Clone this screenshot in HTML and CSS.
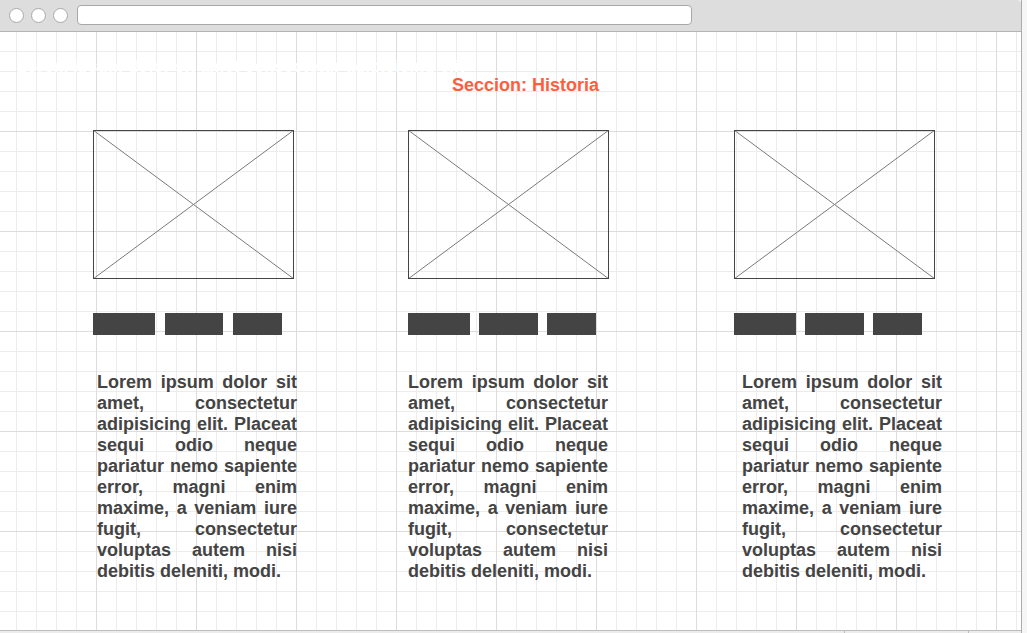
FILE: index.html
```html
<!DOCTYPE html>
<html lang="es">

<head>
    <meta charset="UTF-8">
    <meta name="viewport" content="width=device-width, initial-scale=1.0">
    <title>Wireframe - Seccion Historia</title>
    <link rel="stylesheet" href="styles.css">
</head>

<body>
    <div class="window">
        <!--barra del navegador-->
        <div class="titlebar">
            <span class="dot"></span>
            <span class="dot"></span>
            <span class="dot"></span>
            <div class="address"></div>
        </div>

        <!--lienzo con cuadricula-->
        <div class="canvas">
            <h1 class="hero-title">Lorem ipsum dolor sit amet consectetur adipisicing elit</h1>
            <h2 class="section-title">Seccion: Historia</h2>

            <div class="cards">
                <div class="card card-first">
                    <svg class="placeholder" width="201" height="149" viewBox="0 0 201 149">
                        <line x1="0" y1="0" x2="201" y2="149" />
                        <line x1="201" y1="0" x2="0" y2="149" />
                        <rect x="0.5" y="0.5" width="200" height="148" />
                    </svg>
                    <div class="tags">
                        <span class="tag tag-a"></span>
                        <span class="tag tag-b"></span>
                        <span class="tag tag-c"></span>
                    </div>
                    <p class="card-text">Lorem ipsum dolor sit amet, consectetur adipisicing elit. Placeat sequi odio neque pariatur nemo sapiente error, magni enim maxime, a veniam iure fugit, consectetur voluptas autem nisi debitis deleniti, modi.</p>
                </div>

                <div class="card card-mid">
                    <svg class="placeholder" width="201" height="149" viewBox="0 0 201 149">
                        <line x1="0" y1="0" x2="201" y2="149" />
                        <line x1="201" y1="0" x2="0" y2="149" />
                        <rect x="0.5" y="0.5" width="200" height="148" />
                    </svg>
                    <div class="tags">
                        <span class="tag tag-a"></span>
                        <span class="tag tag-b"></span>
                        <span class="tag tag-c"></span>
                    </div>
                    <p class="card-text">Lorem ipsum dolor sit amet, consectetur adipisicing elit. Placeat sequi odio neque pariatur nemo sapiente error, magni enim maxime, a veniam iure fugit, consectetur voluptas autem nisi debitis deleniti, modi.</p>
                </div>

                <div class="card card-last">
                    <svg class="placeholder" width="201" height="149" viewBox="0 0 201 149">
                        <line x1="0" y1="0" x2="201" y2="149" />
                        <line x1="201" y1="0" x2="0" y2="149" />
                        <rect x="0.5" y="0.5" width="200" height="148" />
                    </svg>
                    <div class="tags">
                        <span class="tag tag-a"></span>
                        <span class="tag tag-b"></span>
                        <span class="tag tag-c"></span>
                    </div>
                    <p class="card-text">Lorem ipsum dolor sit amet, consectetur adipisicing elit. Placeat sequi odio neque pariatur nemo sapiente error, magni enim maxime, a veniam iure fugit, consectetur voluptas autem nisi debitis deleniti, modi.</p>
                </div>
            </div>
        </div>

        <!--barra de estado-->
        <div class="statusbar">
            <span class="stat stat-size">1024/633</span>
            <span class="stat stat-pos">X: 0 Y: 23</span>
            <span class="stat stat-w">W: 0</span>
        </div>
    </div>
</body>

</html>
```

FILE: styles.css
```css
* {
    margin: 0;
    padding: 0;
    box-sizing: border-box;
}

html,
body {
    height: 100%;
    overflow: hidden;
}

body {
    background-color: #f6f6f6;
    font-family: "Liberation Sans", Arial, sans-serif;
}

.window {
    width: 1022px;
    height: 633px;
    border-right: 1px solid #acacac;
    overflow: hidden;
}

/*barra superior*/
.titlebar {
    display: flex;
    align-items: center;
    height: 32px;
    padding: 0 0 1px 9px;
    background-color: #dddddd;
    border-bottom: 1px solid #b4b4b4;
    border-top-right-radius: 4px;
}

.dot {
    width: 15px;
    height: 15px;
    margin-right: 7px;
    background-color: #fff;
    border: 1px solid #a9a9a9;
    border-radius: 50%;
}

.address {
    width: 615px;
    height: 20px;
    margin-left: 2px;
    background-color: #fff;
    border: 1px solid #a8a8a8;
    border-radius: 4px;
}

/*lienzo con cuadricula*/
.canvas {
    height: 598px;
    padding-top: 26px;
    background-color: #fff;
    background-image:
        linear-gradient(to right, #dcdcdc 0, #dcdcdc 1px, transparent 1px),
        linear-gradient(to bottom, #dcdcdc 0, #dcdcdc 1px, transparent 1px),
        linear-gradient(to right, #ececec 0, #ececec 1px, transparent 1px),
        linear-gradient(to bottom, #ececec 0, #ececec 1px, transparent 1px);
    background-size: 100px 100%, 100% 100px, 20px 100%, 100% 20px;
    background-position: 96px 0, 0 99px, 16px 0, 0 19px;
}

.hero-title {
    padding-left: 17px;
    color: #fff;
    font-size: 16px;
    line-height: 17px;
    font-weight: bold;
    letter-spacing: 0.5px;
    white-space: nowrap;
}

.section-title {
    padding-left: 452px;
    color: #fd5e3e;
    font-size: 18px;
    line-height: 21px;
    font-weight: bold;
}

.cards {
    display: flex;
    align-items: flex-start;
    margin-top: 34px;
    padding-left: 93px;
}

.card {
    width: 201px;
}

.card-mid {
    margin-left: 114px;
}

.card-last {
    margin-left: 125px;
}

.placeholder {
    display: block;
}

.placeholder line {
    stroke: #7a7a7a;
    stroke-width: 1;
}

.placeholder rect {
    fill: none;
    stroke: #444;
    stroke-width: 1;
}

.tags {
    display: flex;
    gap: 9px;
    margin-top: 34px;
}

.card-first .tags {
    gap: 10px;
}

.tag {
    height: 22px;
    background-color: #444;
}

.tag-a {
    width: 62px;
}

.tag-b {
    width: 59px;
}

.card-first .tag-b {
    width: 58px;
}

.tag-c {
    width: 49px;
}

.card-text {
    width: 200px;
    margin-top: 37px;
    color: #444;
    font-size: 18px;
    line-height: 21px;
    font-weight: bold;
    text-align: justify;
}

.card-first .card-text {
    margin-left: 4px;
}

.card-last .card-text {
    margin-left: 8px;
}

/*barra de estado*/
.statusbar {
    display: flex;
    height: 20px;
    padding-left: 772px;
    background-color: #ececec;
    border-top: 1px solid #bdbdbd;
    color: #555;
    font-size: 12px;
    line-height: 14px;
}

.stat-size {
    width: 72px;
}

.stat-pos {
    width: 124px;
    padding-left: 36px;
    border-left: 1px solid #bdbdbd;
}

.stat-w {
    padding-left: 22px;
    border-left: 1px solid #bdbdbd;
}
```
